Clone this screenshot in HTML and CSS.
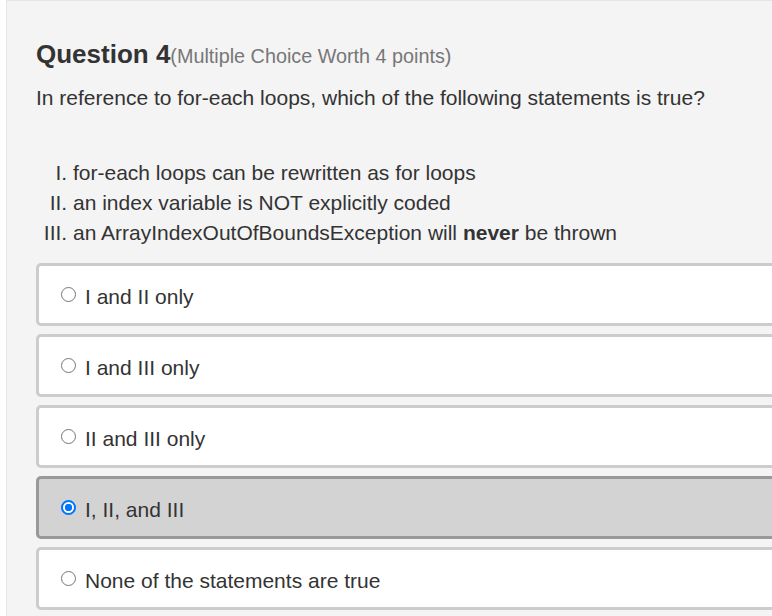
FILE: index.html
```html
<!DOCTYPE html>
<html lang="en">
<head>
<meta charset="utf-8">
<title>Question 4</title>
<link rel="stylesheet" href="styles.css">
</head>
<body>
<div class="panel">
  <h2 class="title">Question 4<span class="sub">(Multiple Choice Worth 4 points)</span></h2>
  <p class="prompt">In reference to for-each loops, which of the following statements is true?</p>
  <ol class="stmts">
    <li>for-each loops can be rewritten as for loops</li>
    <li>an index variable is NOT explicitly coded</li>
    <li>an ArrayIndexOutOfBoundsException will <b>never</b> be thrown</li>
  </ol>
  <div class="options">
    <label class="opt"><input type="radio" name="q4"><span>I and II only</span></label>
    <label class="opt"><input type="radio" name="q4"><span>I and III only</span></label>
    <label class="opt"><input type="radio" name="q4"><span>II and III only</span></label>
    <label class="opt selected"><input type="radio" name="q4" checked><span>I, II, and III</span></label>
    <label class="opt"><input type="radio" name="q4"><span>None of the statements are true</span></label>
  </div>
</div>
</body>
</html>
```
FILE: styles.css
```css
html, body {
  margin: 0;
  padding: 0;
  background: #ffffff;
  overflow: hidden;
}
body {
  font-family: "Liberation Sans", Arial, sans-serif;
  color: #333333;
  width: 772px;
  height: 616px;
}
.panel {
  margin-left: 6px;
  width: 820px;
  min-height: 640px;
  background: #f4f4f4;
  border: 1px solid #e6e6e6;
  padding: 37px 0 0 29px;
  box-sizing: border-box;
}
.title {
  margin: 0;
  font-size: 26px;
  font-weight: bold;
  line-height: 32px;
  color: #333333;
}
.sub {
  font-size: 19.8px;
  font-weight: normal;
  color: #777777;
}
.prompt {
  margin: 12px 0 0 0;
  font-size: 21px;
  line-height: 28px;
}
.stmts {
  list-style-type: upper-roman;
  margin: 46px 0 0 0;
  padding-left: 37px;
  font-size: 21px;
  line-height: 30px;
}
.options {
  margin-top: 15px;
  display: flex;
  flex-direction: column;
  gap: 8px;
}
.opt {
  display: flex;
  align-items: center;
  gap: 9px;
  height: 63px;
  box-sizing: border-box;
  border: 3px solid #cccccc;
  border-radius: 5px;
  background: #ffffff;
  padding: 5px 0 0 22px;
  font-size: 21px;
}
.opt input {
  appearance: none;
  -webkit-appearance: none;
  margin: -6px 0 0 0;
  width: 15px;
  height: 15px;
  box-sizing: border-box;
  border: 1.5px solid #767676;
  border-radius: 50%;
  background: #ffffff;
  flex: none;
}
.opt input:checked {
  border: 2px solid #0075ff;
  background: radial-gradient(circle, #0075ff 0 3.4px, #ffffff 4px);
}
.opt.selected {
  background: #d3d3d3;
  border-color: #999999;
}
```
